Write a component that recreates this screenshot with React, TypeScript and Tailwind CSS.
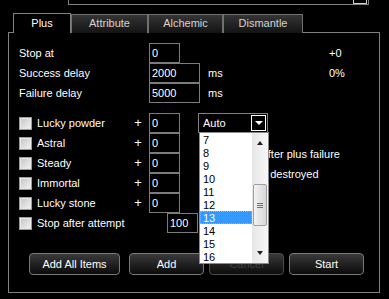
import React from 'react'

const tabs = [
  { label: 'Plus', w: 'w-[58px]', active: true },
  { label: 'Attribute', w: 'w-[77px]', active: false },
  { label: 'Alchemic', w: 'w-[75px]', active: false },
  { label: 'Dismantle', w: 'w-[80px]', active: false },
]

const items = ['Lucky powder', 'Astral', 'Steady', 'Immortal', 'Lucky stone']
const listValues = ['7', '8', '9', '10', '11', '12', '13', '14', '15', '16']

const CheckBox = () => (
  <div className="w-[13px] h-[13px] shrink-0 border border-[#9c9c9c] bg-gradient-to-br from-[#c4c4c4] to-[#f4f4f4] shadow-[inset_0_0_0_1px_#e8e8e8]" />
)

const Field = ({ value, w }: { value: string; w: string }) => (
  <div className={`${w} h-[20px] border border-[#7c7c7c] bg-black text-white pl-[2px] flex items-center`}>
    {value}
  </div>
)

const Btn = ({ label, w, disabled }: { label: string; w: string; disabled?: boolean }) => (
  <div
    className={`${w} h-[22px] rounded-[4px] border flex items-center justify-center bg-gradient-to-b from-[#3a3a3a] to-[#0c0c0c] ${
      disabled ? 'border-[#4c4c4c] text-[#3c3c3c]' : 'border-[#7a7a7a] text-white'
    }`}
  >
    {label}
  </div>
)

const DropList = () => (
  <div className="absolute left-0 top-full z-20 w-[70px] h-[132px] bg-white border border-[#8a8a8a] overflow-hidden">
    <div className="flex flex-col">
      {listValues.map((v) => (
        <div
          key={v}
          className={`h-[13px] leading-[12px] w-[52px] pl-[2px] ${
            v === '13' ? 'bg-[#3399ff] text-white border border-dotted border-[#f0a040]' : 'text-black border border-transparent'
          }`}
        >
          {v}
        </div>
      ))}
    </div>
    <div className="absolute right-0 top-0 bottom-0 w-[16px] bg-gradient-to-r from-[#e6e6e6] to-[#f8f8f8]">
      <div className="absolute left-[5px] top-[8px] w-0 h-0 border-x-[3px] border-x-transparent border-b-[4px] border-b-[#202020]" />
      <div className="absolute left-[1px] top-[51px] w-[14px] h-[42px] rounded-[2px] border border-[#a0a0a0] bg-gradient-to-r from-[#f2f2f2] to-[#d8d8d8] flex flex-col items-center justify-center gap-[1px]">
        <div className="w-[6px] h-px bg-[#707070]" />
        <div className="w-[6px] h-px bg-[#707070]" />
        <div className="w-[6px] h-px bg-[#707070]" />
      </div>
      <div className="absolute left-[5px] bottom-[8px] w-0 h-0 border-x-[3px] border-x-transparent border-t-[4px] border-t-[#202020]" />
    </div>
  </div>
)

export default function App() {
  return (
    <div className="w-[389px] h-[299px] bg-black overflow-hidden text-[11px] text-white font-['Liberation_Sans',Arial,sans-serif]">
      {/* upper box, cut off */}
      <div className="ml-[68px] w-[301px] h-[5px] border-x border-b border-[#808080] flex justify-end">
        <div className="w-[14px] h-[4px] mr-[1px] border-x border-b border-[#d0d0d0]" />
      </div>

      {/* tabs */}
      <div className="mt-[8px] ml-[13px] h-[20px] -mb-px flex items-end">
        {tabs.map((t) =>
          t.active ? (
            <div
              key={t.label}
              className={`${t.w} h-[20px] relative z-10 bg-black border-x border-t border-[#808080] flex items-center justify-center pb-[1px]`}
            >
              {t.label}
            </div>
          ) : (
            <div
              key={t.label}
              className={`${t.w} h-[19px] border-x border-t border-[#707070] bg-gradient-to-b from-[#353535] to-[#141414] text-[#d4d4d4] flex items-center justify-center pb-[1px]`}
            >
              {t.label}
            </div>
          )
        )}
      </div>

      {/* panel */}
      <div className="ml-[8px] w-[372px] h-[261px] border border-[#808080] pl-[10px] pt-[10px]">
        <div className="grid grid-cols-[130px_59px_121px_auto] auto-rows-[20px] items-center">
          <span>Stop at</span>
          <Field value="0" w="w-[31px]" />
          <span />
          <span>+0</span>

          <span>Success delay</span>
          <Field value="2000" w="w-[51px]" />
          <span>ms</span>
          <span>0%</span>

          <span>Failure delay</span>
          <Field value="5000" w="w-[51px]" />
          <span>ms</span>
          <span />
        </div>

        <div className="mt-[10px] flex">
          <div className="w-[179px] flex flex-col">
            {items.map((it) => (
              <div key={it} className="h-[20px] flex items-center">
                <CheckBox />
                <span className="ml-[5px] w-[93px]">{it}</span>
                <span className="w-[19px] text-center pr-[3px] text-[13px]">+</span>
                <Field value="0" w="w-[31px]" />
              </div>
            ))}
            <div className="h-[20px] flex items-center">
              <CheckBox />
              <span className="ml-[5px] w-[133px]">Stop after attempt</span>
              <Field value="100" w="w-[31px] shrink-0" />
            </div>
          </div>

          <div className="flex flex-col">
            <div className="relative w-[70px] h-[20px] border border-[#808080] flex items-center justify-between pl-[4px] pr-[1px]">
              <span>Auto</span>
              <div className="w-[15px] h-[16px] border border-white flex items-center justify-center">
                <div className="w-0 h-0 border-x-[4px] border-x-transparent border-t-[4px] border-t-white" />
              </div>
              <DropList />
            </div>
            <div className="mt-[11px] h-[20px] flex items-center pl-[20px] whitespace-nowrap">
              <CheckBox />
              <span className="ml-[5px]">Stop after plus failure</span>
            </div>
            <div className="h-[20px] flex items-center pl-[20px] whitespace-nowrap">
              <CheckBox />
              <span className="ml-[5px]">Stop if destroyed</span>
            </div>
          </div>
        </div>

        <div className="mt-[20px] ml-[10px] flex">
          <Btn label="Add All Items" w="w-[91px]" />
          <div className="w-[9px]" />
          <Btn label="Add" w="w-[75px]" />
          <div className="w-[5px]" />
          <Btn label="Cancel" w="w-[75px]" disabled />
          <div className="w-[5px]" />
          <Btn label="Start" w="w-[75px]" />
        </div>
      </div>
    </div>
  )
}
